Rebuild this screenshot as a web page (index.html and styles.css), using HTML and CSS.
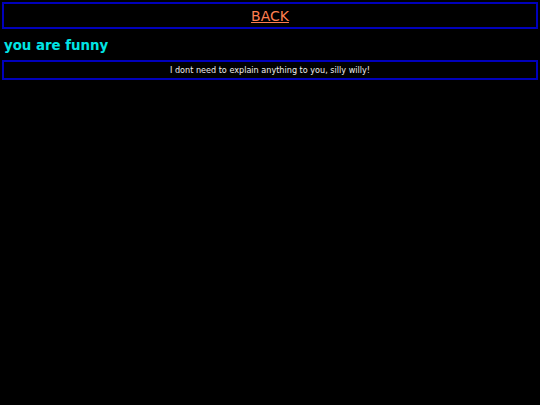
FILE: index.html
```html
<!DOCTYPE html>
<html>
<head>
<meta charset="utf-8">
<link rel="stylesheet" href="styles.css">
</head>
<body>
<div class="back"><a href="#" class="back-link">BACK</a></div>
<h1 class="title">you are funny</h1>
<div class="message">I dont need to explain anything to you, silly willy!</div>
</body>
</html>
```
FILE: styles.css
```css
html, body {
  background: #000;
}
body {
  margin: 2px;
  font-family: "DejaVu Sans", Verdana, sans-serif;
  color: #eee;
}
.back {
  border: 2px solid #0000bb;
  text-align: center;
  padding: 3px 0 2px;
  line-height: 18px;
}
.back-link {
  color: #ff7f50;
  font-family: "DejaVu Sans", Verdana, sans-serif;
  font-size: 14px;
  text-decoration: underline;
}
.title {
  color: #00e5e5;
  font-size: 13.33px;
  font-weight: bold;
  margin: 9px 2px 6px;
  line-height: 16px;
}
.message {
  border: 2px solid #0000bb;
  text-align: center;
  font-family: "DejaVu Sans Condensed", "DejaVu Sans", sans-serif;
  font-stretch: condensed;
  font-size: 9px;
  line-height: 10px;
  padding: 3px 0;
}
```
